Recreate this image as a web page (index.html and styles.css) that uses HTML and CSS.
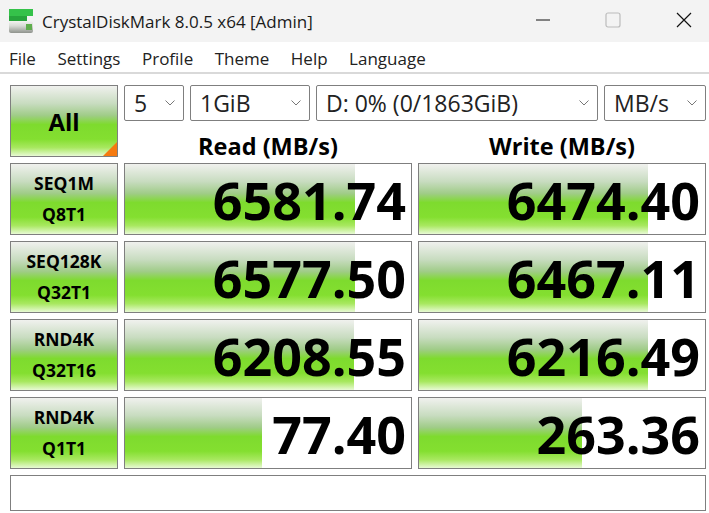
FILE: index.html
```html
<!DOCTYPE html>
<html lang="en">
<head>
  <meta charset="UTF-8" />
  <title>CrystalDiskMark 8.0.5 x64 [Admin]</title>
  <link rel="stylesheet" href="styles.css">
</head>
<body>

<div class="title-bar">
  <svg class="app-icon" width="24" height="24" viewBox="0 0 24 24">
    <defs>
      <linearGradient id="driveBody" x1="0" y1="0" x2="0" y2="1">
        <stop offset="0" stop-color="#f2f3f0"/>
        <stop offset="0.4" stop-color="#d8dbd6"/>
        <stop offset="1" stop-color="#8f938d"/>
      </linearGradient>
    </defs>
    <rect x="0" y="0" width="24" height="7" fill="#35c24a"/>
    <rect x="0" y="7" width="18" height="5" fill="#27a53c"/>
    <rect x="0" y="12" width="24" height="12" rx="2" fill="url(#driveBody)"/>
    <rect x="17" y="15" width="6" height="6" fill="#5fae4c"/>
  </svg>
  <span class="app-title">CrystalDiskMark 8.0.5 x64 [Admin]</span>
  <div class="window-btns">
    <svg width="16" height="16" viewBox="0 0 16 16"><path d="M2 8h15" stroke="#111" stroke-width="1" fill="none"/></svg>
    <svg width="16" height="16" viewBox="0 0 16 16"><rect x="1" y="1" width="14" height="14" rx="2" stroke="#bcbcbc" stroke-width="1.2" fill="#f3f3f3"/></svg>
    <svg width="16" height="16" viewBox="0 0 16 16"><path d="M1 1l14 14M15 1L1 15" stroke="#111" stroke-width="1.2" fill="none"/></svg>
  </div>
</div>

<div class="menu-bar">
  <span>File</span>
  <span>Settings</span>
  <span>Profile</span>
  <span>Theme</span>
  <span>Help</span>
  <span>Language</span>
</div>

<div class="main">
  <button class="tile all-btn">All</button>

  <div class="top-right">
    <div class="selects">
      <div class="select sel-count">5<svg class="chev" width="10" height="6" viewBox="0 0 10 6"><path d="M0.5 0.5l4.5 4.5 4.5-4.5" stroke="#777" fill="none"/></svg></div>
      <div class="select sel-size">1GiB<svg class="chev" width="10" height="6" viewBox="0 0 10 6"><path d="M0.5 0.5l4.5 4.5 4.5-4.5" stroke="#777" fill="none"/></svg></div>
      <div class="select sel-drive">D: 0% (0/1863GiB)<svg class="chev" width="10" height="6" viewBox="0 0 10 6"><path d="M0.5 0.5l4.5 4.5 4.5-4.5" stroke="#777" fill="none"/></svg></div>
      <div class="select sel-unit">MB/s<svg class="chev" width="10" height="6" viewBox="0 0 10 6"><path d="M0.5 0.5l4.5 4.5 4.5-4.5" stroke="#777" fill="none"/></svg></div>
    </div>
    <div class="headings">
      <div>Read (MB/s)</div>
      <div>Write (MB/s)</div>
    </div>
  </div>

  <button class="tile test-btn">SEQ1M<br>Q8T1</button>
  <div class="result" style="background-size: 230px 100%">6581.74</div>
  <div class="result" style="background-size: 229px 100%">6474.40</div>

  <button class="tile test-btn">SEQ128K<br>Q32T1</button>
  <div class="result" style="background-size: 230px 100%">6577.50</div>
  <div class="result" style="background-size: 229px 100%">6467.11</div>

  <button class="tile test-btn">RND4K<br>Q32T16</button>
  <div class="result" style="background-size: 229px 100%">6208.55</div>
  <div class="result" style="background-size: 229px 100%">6216.49</div>

  <button class="tile test-btn">RND4K<br>Q1T1</button>
  <div class="result" style="background-size: 137px 100%">77.40</div>
  <div class="result" style="background-size: 163px 100%">263.36</div>

  <div class="status"></div>
</div>

</body>
</html>
```

FILE: styles.css
```css
* {
  box-sizing: border-box;
  font-family: 'Open Sans', 'Noto Sans', sans-serif;
}

html, body {
  margin: 0;
  height: 513px;
  overflow: hidden;
  background: #fff;
  color: #000;
}

.title-bar {
  display: flex;
  align-items: center;
  height: 42px;
  padding-left: 9px;
  background: #f3f3f3;
}

.app-icon {
  margin-right: 9px;
}

.app-title {
  font-size: 17px;
  color: #1a1a1a;
}

.window-btns {
  display: flex;
  gap: 55px;
  margin-left: auto;
  margin-bottom: 2px;
  padding-right: 17px;
}

.menu-bar {
  display: flex;
  gap: 21.5px;
  align-items: center;
  height: 32px;
  padding: 2px 0 0 9px;
  border-bottom: 2px solid #d9d9d9;
  font-size: 17px;
  color: #222;
}

.main {
  display: grid;
  grid-template-columns: 108px 288px 288px;
  grid-template-rows: repeat(5, 72px) 36px;
  gap: 6px;
  padding: 11px 0 0 10px;
}

.tile, .result, .status, .select {
  border: 1px solid #7f7f7f;
}

.tile {
  padding: 0;
  font-weight: 700;
  color: #000;
  background: linear-gradient(#f0f1ee 0%, #c8dcc0 25%, #a0cc88 42%, #7edb2e 55%, #84df30 76%, #a8e860 88%, #e8fad4 100%);
}

.all-btn {
  position: relative;
  font-size: 24px;
}

.all-btn::after {
  content: "";
  position: absolute;
  right: 0;
  bottom: 0;
  border-style: solid;
  border-width: 7px;
  border-color: transparent #f57a10 #f57a10 transparent;
}

.test-btn {
  font-size: 17.5px;
  line-height: 31px;
}

.top-right {
  grid-column: 2 / 4;
  display: flex;
  flex-direction: column;
}

.selects {
  display: flex;
  gap: 6px;
}

.select {
  display: flex;
  align-items: center;
  height: 36px;
  padding: 0 8px 0 9px;
  border-radius: 2px;
  font-size: 23px;
  color: #222;
}

.chev {
  margin-left: auto;
}

.sel-count { width: 60px; }
.sel-size { width: 120px; }
.sel-drive { width: 282px; }
.sel-unit { width: 102px; }

.headings {
  display: grid;
  grid-template-columns: 288px 288px;
  column-gap: 6px;
  margin-top: 7px;
  text-align: center;
  font-size: 23.5px;
  font-weight: 700;
  line-height: 36px;
}

.result {
  padding-right: 5px;
  text-align: right;
  font-size: 52px;
  font-weight: 700;
  line-height: 72px;
  background-color: #fff;
  background-image: linear-gradient(#f0f1ee 0%, #c8dcc0 25%, #a0cc88 42%, #7edb2e 55%, #84df30 76%, #a8e860 88%, #e8fad4 100%);
  background-repeat: no-repeat;
}

.status {
  grid-column: 1 / 4;
}
```
